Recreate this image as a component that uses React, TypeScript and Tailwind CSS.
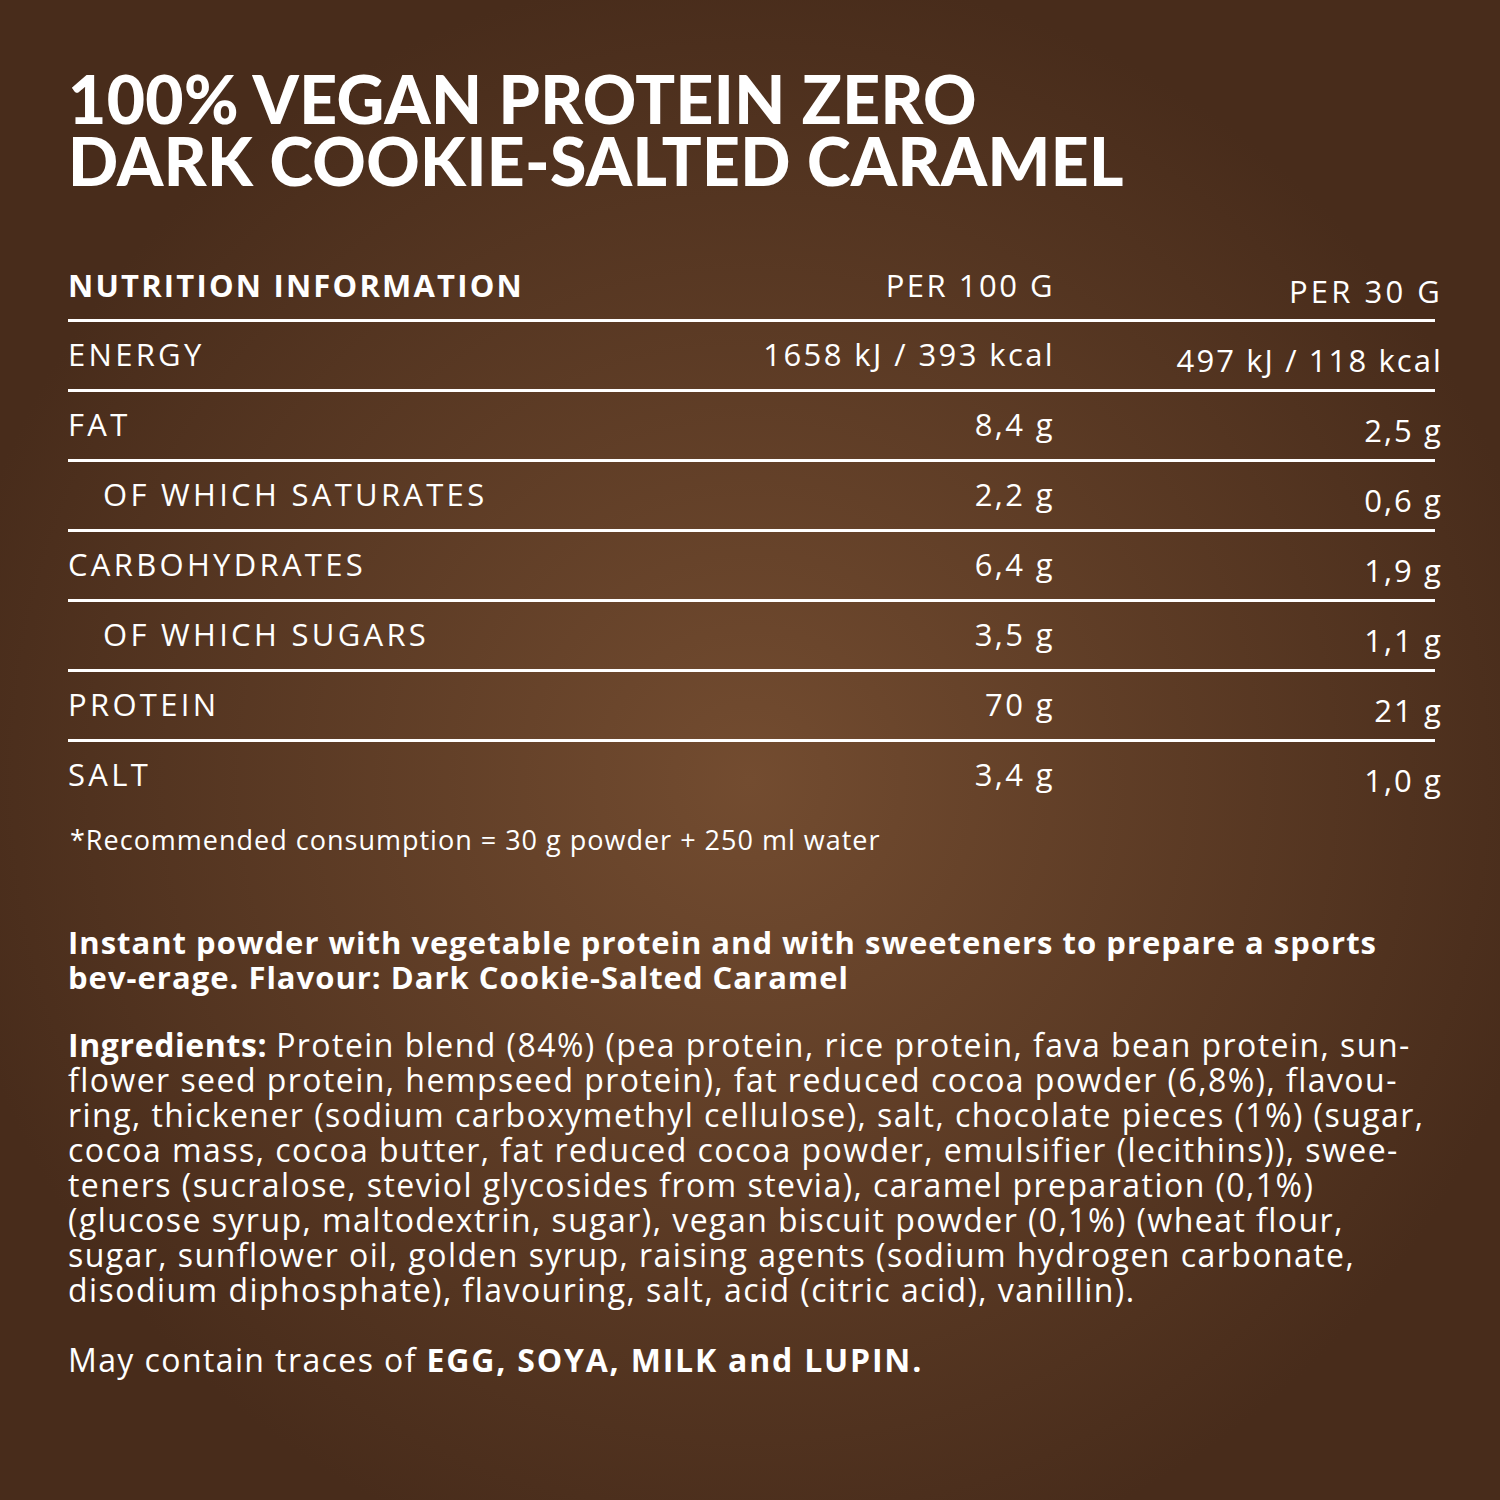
import React from "react";

type Row = { label: string; per100: string; per30: string; sub?: boolean };

const rows: Row[] = [
  { label: "ENERGY", per100: "1658 kJ / 393 kcal", per30: "497 kJ / 118 kcal" },
  { label: "FAT", per100: "8,4 g", per30: "2,5 g" },
  { label: "OF WHICH SATURATES", per100: "2,2 g", per30: "0,6 g", sub: true },
  { label: "CARBOHYDRATES", per100: "6,4 g", per30: "1,9 g" },
  { label: "OF WHICH SUGARS", per100: "3,5 g", per30: "1,1 g", sub: true },
  { label: "PROTEIN", per100: "70 g", per30: "21 g" },
  { label: "SALT", per100: "3,4 g", per30: "1,0 g" },
];

const ingredientLines = [
  "Protein blend (84%) (pea protein, rice protein, fava bean protein, sun-",
  "flower seed protein, hempseed protein), fat reduced cocoa powder (6,8%), flavou-",
  "ring, thickener (sodium carboxymethyl cellulose), salt, chocolate pieces (1%) (sugar,",
  "cocoa mass, cocoa butter, fat reduced cocoa powder, emulsifier (lecithins)), swee-",
  "teners (sucralose, steviol glycosides from stevia), caramel preparation (0,1%)",
  "(glucose syrup, maltodextrin, sugar), vegan biscuit powder (0,1%) (wheat flour,",
  "sugar, sunflower oil, golden syrup, raising agents (sodium hydrogen carbonate,",
  "disodium diphosphate), flavouring, salt, acid (citric acid), vanillin).",
];

export default function App() {
  return (
    <div className="w-[1500px] h-[1500px] bg-radial-[circle_at_50%_52%] from-[#734c30] to-[#482c1b] to-[75%] text-white font-['Open_Sans',sans-serif] font-medium pl-[68px] pt-[68px]">
      <h1 className="font-['Lato',sans-serif] text-[66px] font-black leading-[62px] tracking-[0.4px]">
        100% VEGAN PROTEIN ZERO
        <br />
        DARK COOKIE-SALTED CARAMEL
      </h1>

      <div className="mt-[78px] w-[1367px] text-[31px]">
        <div className="flex h-[52px] border-b-[3px] border-white">
          <div className="flex-1 font-bold leading-none tracking-[2.2px]">NUTRITION INFORMATION</div>
          <div className="w-[400px] text-right leading-none tracking-[2.5px]">PER 100 G</div>
          <div className="w-[388px] -mr-[8px] pt-[6px] text-right leading-none tracking-[3.1px]">PER 30 G</div>
        </div>
        {rows.map((r, i) => (
          <div
            key={r.label}
            className={`flex h-[70px] pt-[17px] ${i < rows.length - 1 ? "border-b-[3px] border-white" : ""}`}
          >
            <div className={`flex-1 leading-none tracking-[3.3px] ${r.sub ? "pl-[35px]" : ""}`}>{r.label}</div>
            <div className="w-[400px] text-right leading-none tracking-[2.4px]">{r.per100}</div>
            <div className="w-[388px] -mr-[8px] pt-[6px] text-right leading-none tracking-[2.1px]">{r.per30}</div>
          </div>
        ))}
      </div>

      <p className="mt-[14px] text-[27px] leading-none pl-[2px] tracking-[1px]">
        *Recommended consumption = 30 g powder + 250 ml water
      </p>

      <p className="mt-[72px] text-[31px] font-bold leading-[35px] tracking-[1px]">
        Instant powder with vegetable protein and with sweeteners to prepare a sports
        <br />
        bev-erage. Flavour: Dark Cookie-Salted Caramel
      </p>

      <p className="mt-[32px] text-[32px] leading-[35px] tracking-[1.45px]">
        {ingredientLines.map((l, i) => (
          <span key={i} className="block">
            {i === 0 && <b className="tracking-[0.6px]">Ingredients: </b>}
            {l}
          </span>
        ))}
      </p>

      <p className="mt-[35px] text-[32px] leading-[35px] tracking-[1.4px]">
        May contain traces of <b className="tracking-[1.8px]">EGG, SOYA, MILK and LUPIN.</b>
      </p>
    </div>
  );
}
